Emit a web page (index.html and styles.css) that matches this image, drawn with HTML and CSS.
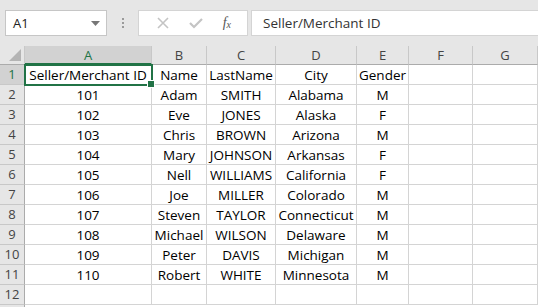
FILE: index.html
```html
<!DOCTYPE html>
<html lang="en">
<head>
    <meta charset="UTF-8">
    <title>Sellers</title>
    <link rel="stylesheet" href="styles.css">
</head>
<body>
    <div class="toolbar">
        <div class="name-box">
            <span>A1</span>
            <svg class="caret" width="9" height="5" viewBox="0 0 9 5"><path d="M0 0h9L4.5 5z" fill="#777"/></svg>
        </div>
        <div class="grip"><i></i><i></i><i></i></div>
        <div class="fx-buttons">
            <svg width="12" height="12" viewBox="0 0 12 12"><path d="M1 1l10 10M11 1L1 11" stroke="#c4c4c4" stroke-width="1.6"/></svg>
            <svg width="14" height="12" viewBox="0 0 14 12"><path d="M1 6l4 4 8-8" stroke="#c4c4c4" stroke-width="2.2" fill="none"/></svg>
            <span class="fx">f<sub>x</sub></span>
        </div>
        <div class="formula">Seller/Merchant ID</div>
    </div>

    <div class="sheet" id="sheet">
        <div class="corner"><svg width="12" height="12" viewBox="0 0 12 12"><path d="M12 0v12H0z" fill="#b4b4b4"/></svg></div>
        <div class="col-head active">A</div>
        <div class="col-head">B</div>
        <div class="col-head">C</div>
        <div class="col-head">D</div>
        <div class="col-head">E</div>
        <div class="col-head">F</div>
        <div class="col-head">G</div>
    </div>

    <script>
        const rows = [
            ['Seller/Merchant ID', 'Name', 'LastName', 'City', 'Gender'],
            ['101', 'Adam', 'SMITH', 'Alabama', 'M'],
            ['102', 'Eve', 'JONES', 'Alaska', 'F'],
            ['103', 'Chris', 'BROWN', 'Arizona', 'M'],
            ['104', 'Mary', 'JOHNSON', 'Arkansas', 'F'],
            ['105', 'Nell', 'WILLIAMS', 'California', 'F'],
            ['106', 'Joe', 'MILLER', 'Colorado', 'M'],
            ['107', 'Steven', 'TAYLOR', 'Connecticut', 'M'],
            ['108', 'Michael', 'WILSON', 'Delaware', 'M'],
            ['109', 'Peter', 'DAVIS', 'Michigan', 'M'],
            ['110', 'Robert', 'WHITE', 'Minnesota', 'M'],
            []
        ];

        const sheet = document.getElementById('sheet');
        rows.forEach((row, i) => {
            const head = document.createElement('div');
            head.className = 'row-head' + (i === 0 ? ' active' : '');
            head.textContent = i + 1;
            sheet.appendChild(head);
            for (let c = 0; c < 7; c++) {
                const cell = document.createElement('div');
                cell.className = 'cell';
                if (i === 0 && c === 0) cell.classList.add('selected');
                cell.textContent = row[c] || '';
                sheet.appendChild(cell);
            }
        });
    </script>
</body>
</html>
```

FILE: styles.css
```css
* {
    margin: 0;
    padding: 0;
    box-sizing: border-box;
}

body {
    width: 538px;
    height: 307px;
    overflow: hidden;
    background: #fff;
    font-family: 'Open Sans', 'Liberation Sans', sans-serif;
}

.toolbar {
    height: 46px;
    background: #e6e6e6;
    display: flex;
    align-items: flex-start;
    padding: 10px 0 0 5px;
}

.name-box {
    width: 102px;
    height: 26px;
    background: #fff;
    border: 1px solid #c6c6c6;
    display: flex;
    align-items: center;
    justify-content: space-between;
    padding: 0 6px 0 7px;
    font-size: 13px;
    color: #222;
}

.grip {
    width: 31px;
    height: 26px;
    display: flex;
    flex-direction: column;
    align-items: center;
    justify-content: center;
    gap: 2px;
}

.grip i {
    width: 2px;
    height: 2px;
    background: #9a9a9a;
}

.fx-buttons {
    width: 110px;
    height: 26px;
    background: #fff;
    border: 1px solid #d4d4d4;
    display: flex;
    align-items: center;
    justify-content: space-around;
    padding: 0 6px 0 8px;
}

.fx {
    font-family: 'Liberation Serif', serif;
    font-style: italic;
    font-size: 14px;
    color: #555;
}

.fx sub {
    font-size: 10px;
    vertical-align: -1px;
}

.formula {
    flex: 1;
    height: 26px;
    margin-left: 3px;
    background: #fff;
    border: 1px solid #d4d4d4;
    border-right: none;
    padding-left: 11px;
    font-size: 13.5px;
    line-height: 24px;
    color: #333;
}

.sheet {
    height: 261px;
    display: grid;
    grid-template-columns: 25px 127px 55px 69px 81px 52px 64px 65px;
    grid-template-rows: 19px;
    grid-auto-rows: 20px;
    align-content: start;
    background: linear-gradient(to right, #e6e6e6 24px, #ababab 24px, #ababab 25px, transparent 25px);
    font-size: 13.5px;
    color: #000;
}

.corner {
    background: #e6e6e6;
    border-right: 1px solid #c8c8c8;
    border-bottom: 1px solid #ababab;
    display: flex;
    align-items: flex-end;
    justify-content: flex-end;
    padding: 0 3px 3px 0;
}

.col-head {
    background: #e6e6e6;
    border-right: 1px solid #c8c8c8;
    border-bottom: 1px solid #ababab;
    text-align: center;
    line-height: 18px;
    font-size: 13px;
    color: #444;
}

.col-head.active {
    background: #d2d2d2;
    color: #217346;
    border-bottom: 2px solid #217346;
}

.row-head {
    background: #e6e6e6;
    border-right: 1px solid #ababab;
    border-bottom: 1px solid #c8c8c8;
    text-align: center;
    line-height: 19px;
    font-size: 13px;
    color: #444;
}

.row-head.active {
    background: #d2d2d2;
    color: #217346;
}

.cell {
    border-right: 1px solid #d4d4d4;
    border-bottom: 1px solid #d4d4d4;
    text-align: center;
    line-height: 20px;
    white-space: nowrap;
    overflow: hidden;
}

.cell.selected {
    position: relative;
    overflow: visible;
    outline: 2px solid #217346;
    outline-offset: -1px;
    z-index: 1;
}

.cell.selected::after {
    content: '';
    position: absolute;
    right: -4px;
    bottom: -4px;
    width: 6px;
    height: 6px;
    background: #217346;
    border: 1px solid #fff;
}
```
